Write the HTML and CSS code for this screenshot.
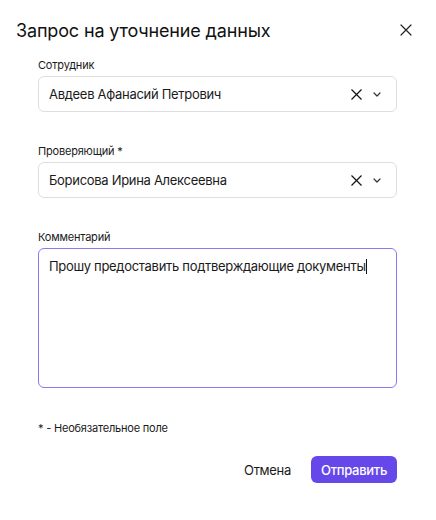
FILE: index.html
```html
<!DOCTYPE html>
<html lang="ru">
<head>
<meta charset="utf-8">
<link rel="stylesheet" href="styles.css">
</head>
<body>
<div class="dialog">
  <div class="header">
    <h1 class="title">Запрос на уточнение данных</h1>
    <button class="close" aria-label="Закрыть">
      <svg width="12" height="12" viewBox="0 0 12 12"><path d="M1 1L11 11M11 1L1 11" stroke="#222" stroke-width="1.2" fill="none" stroke-linecap="round"/></svg>
    </button>
  </div>
  <div class="body">
    <div class="field">
      <label class="label">Сотрудник</label>
      <div class="select">
        <span class="value">Авдеев Афанасий Петрович</span>
        <span class="icons">
          <svg class="clear" width="11" height="11" viewBox="0 0 11 11"><path d="M0.5 0.5L10.5 10.5M10.5 0.5L0.5 10.5" stroke="#111" stroke-width="1.2" fill="none"/></svg>
          <svg class="chev" width="8" height="5" viewBox="0 0 8 5"><path d="M1 1L4 4L7 1" stroke="#333" stroke-width="1.2" fill="none" stroke-linecap="round" stroke-linejoin="round"/></svg>
        </span>
      </div>
    </div>
    <div class="field">
      <label class="label">Проверяющий *</label>
      <div class="select">
        <span class="value">Борисова Ирина Алексеевна</span>
        <span class="icons">
          <svg class="clear" width="11" height="11" viewBox="0 0 11 11"><path d="M0.5 0.5L10.5 10.5M10.5 0.5L0.5 10.5" stroke="#111" stroke-width="1.2" fill="none"/></svg>
          <svg class="chev" width="8" height="5" viewBox="0 0 8 5"><path d="M1 1L4 4L7 1" stroke="#333" stroke-width="1.2" fill="none" stroke-linecap="round" stroke-linejoin="round"/></svg>
        </span>
      </div>
    </div>
    <div class="field">
      <label class="label">Комментарий</label>
      <div class="textarea"><span>Прошу предоставить подтверждающие документы</span><span class="caret"></span></div>
    </div>
    <p class="note">* - Необязательное поле</p>
    <div class="actions">
      <button class="btn-text">Отмена</button>
      <button class="btn-primary">Отправить</button>
    </div>
  </div>
</div>
</body>
</html>
```

FILE: styles.css
```css
* { box-sizing: border-box; }
html, body { margin: 0; padding: 0; background: #fff; }
body {
  font-family: Inter, "Noto Sans", sans-serif;
  color: #1a1a1a;
  width: 436px;
  height: 520px;
}
.dialog { padding: 0; }
.header {
  display: flex;
  align-items: center;
  justify-content: space-between;
  padding: 19px 23px 0 16px;
  height: 42px;
}
.title {
  margin: 0;
  font-size: 18px;
  font-weight: 400;
  letter-spacing: -0.15px;
  color: #111;
}
.close {
  border: 0;
  background: none;
  padding: 0;
  width: 14px;
  height: 14px;
  display: flex;
  align-items: center;
  justify-content: center;
  margin-top: -1px;
}
.body {
  padding: 16px 39px 0 38px;
}
.field {
  display: flex;
  flex-direction: column;
}
.field + .field { margin-top: 32px; }
.label {
  font-size: 11px;
  line-height: 14px;
  letter-spacing: -0.2px;
  color: #1a1a1a;
  margin-bottom: 4px;
}
.select {
  height: 36px;
  border: 1px solid #dedede;
  border-radius: 6px;
  display: flex;
  align-items: center;
  justify-content: space-between;
  padding: 0 15px 0 10px;
}
.value {
  font-size: 13px;
  letter-spacing: -0.3px;
  color: #1a1a1a;
}
.icons {
  display: flex;
  align-items: center;
  gap: 11px;
}
.chev { margin-top: 1px; }
.textarea {
  height: 140px;
  border: 1px solid #8b79f2;
  border-radius: 6px;
  padding: 8px 10px;
  font-size: 13px;
  line-height: 18px;
  letter-spacing: -0.3px;
  color: #1a1a1a;
}
.caret {
  display: inline-block;
  width: 1px;
  height: 15px;
  background: #111;
  vertical-align: -3px;
}
.note {
  margin: 33px 0 0;
  font-size: 11px;
  line-height: 14px;
  letter-spacing: -0.2px;
  color: #1a1a1a;
}
.actions {
  display: flex;
  justify-content: flex-end;
  align-items: center;
  gap: 20px;
  margin-top: 21px;
}
.btn-text {
  border: 0;
  background: none;
  padding: 0;
  font-family: inherit;
  font-size: 13px;
  letter-spacing: -0.3px;
  color: #1a1a1a;
}
.btn-primary {
  border: 0;
  background: #6647e9;
  color: #fff;
  font-family: inherit;
  font-size: 13px;
  font-weight: 500;
  letter-spacing: -0.3px;
  height: 27px;
  padding: 0 10px;
  border-radius: 6px;
}
```
